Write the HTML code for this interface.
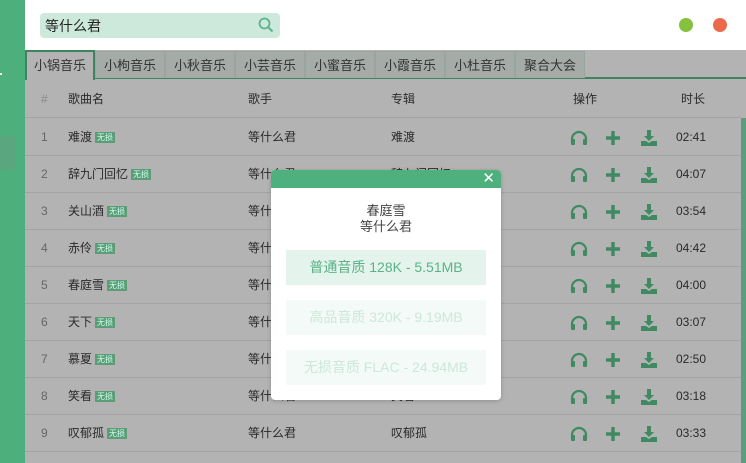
<!DOCTYPE html><html style="width:746px;height:463px;overflow:hidden"><head><meta charset="utf-8"><style>
*{margin:0;padding:0;box-sizing:border-box}
body{width:746px;height:463px;overflow:hidden;position:relative;background:#b3b3b3;font-family:"Liberation Sans","Noto Sans CJK SC",sans-serif;font-size:12px;color:#2a2a2a}
.side{position:absolute;left:0;top:0;width:25px;height:463px;background:#4daf7b}
.blk{position:absolute;left:0;top:136px;width:15px;height:34px;background:#5aa77f;border-radius:0 3px 3px 0}
.top{position:absolute;left:25px;top:0;width:721px;height:50px;background:#fff}
.search{position:absolute;left:15px;top:13px;width:240px;height:25px;background:#cde9dc;border-radius:4px;font-size:14px;padding:3px 0 0 5px;color:#222}
.dot{position:absolute;top:18px;width:14px;height:14px;border-radius:50%}
.tabs{position:absolute;left:25px;top:50px;width:721px;height:29px;border-bottom:2px solid #3f8460}
.tab{position:absolute;top:1px;height:27px;background:#a5aca8;border:1px solid #9aa5a0;border-bottom:none;font-size:13px;text-align:center;line-height:27px;color:#333}
.tab.a{background:#b3b3b3;border:2px solid #3f8460;border-bottom:none;height:30px;top:0}
.row{position:absolute;left:25px;width:716px;height:37px;border-bottom:1px solid #a3a3a3;line-height:37px}
.row span{position:absolute;top:0}
.n{left:16px;color:#666}
.tg{display:inline-block;background:#5c9d77;color:#cfe;font-size:8px;line-height:11px;height:11px;padding:0 2px;margin-left:3px;vertical-align:middle;font-style:normal}
.ic{position:absolute;top:11px}
.scroll{position:absolute;left:741px;top:118px;width:5px;height:345px;background:#5c9e7c}
.mod{position:absolute;left:271px;top:170px;width:230px;height:230px;background:#fff;border-radius:4px;overflow:hidden;box-shadow:0 1px 4px rgba(0,0,0,.2)}
.mh{height:18px;background:#4eb07d;color:#fff;text-align:right;padding-right:6px;font-size:15px;line-height:17px}
.t{text-align:center;font-size:13px;color:#444;line-height:16px}
.b{position:absolute;left:15px;width:200px;height:35px;text-align:center;line-height:35px;font-size:14px}
</style></head><body>
<div class="side"><div class="blk"></div><div style="position:absolute;left:0;top:73px;width:2px;height:2px;background:#fff"></div></div>
<div class="top"><div class="search">等什么君
<svg style="position:absolute;right:6px;top:4px" width="16" height="16" viewBox="0 0 16 16"><circle cx="6.5" cy="6.5" r="5" fill="none" stroke="#5cb48a" stroke-width="1.8"/><path d="M10 10l4.5 4.5" stroke="#5cb48a" stroke-width="2"/></svg></div>
<div class="dot" style="left:654px;background:#85c03e"></div><div class="dot" style="left:688px;background:#ec6a4c"></div></div>
<div class="tabs">
<div class="tab a" style="left:0;width:70px">小锅音乐</div>
<div class="tab" style="left:70px;width:70px">小枸音乐</div>
<div class="tab" style="left:140px;width:70px">小秋音乐</div>
<div class="tab" style="left:210px;width:70px">小芸音乐</div>
<div class="tab" style="left:280px;width:70px">小蜜音乐</div>
<div class="tab" style="left:350px;width:70px">小霞音乐</div>
<div class="tab" style="left:420px;width:70px">小杜音乐</div>
<div class="tab" style="left:490px;width:70px">聚合大会</div>
</div>
<div class="row" style="top:81px;height:37px;line-height:37px"><span class="n" style="color:#888">#</span><span style="left:43px">歌曲名</span><span style="left:223px">歌手</span><span style="left:366px">专辑</span><span style="left:548px">操作</span><span style="left:656px">时长</span></div>
<div id="rows"></div>
<div class="scroll"></div>
<div class="mod"><div class="mh">✕</div>
<div class="t" style="margin-top:15px">春庭雪</div><div class="t">等什么君</div>
<div class="b" style="top:80px;background:#e4f4ec;color:#5bb286">普通音质 128K - 5.51MB</div>
<div class="b" style="top:130px;background:#f3faf7;color:#cce8da">高品音质 320K - 9.19MB</div>
<div class="b" style="top:180px;background:#f3faf7;color:#cce8da">无损音质 FLAC - 24.94MB</div>
</div>
<script>
var d=[["难渡","难渡","02:41"],["辞九门回忆","辞九门回忆","04:07"],["关山酒","关山酒","03:54"],["赤伶","赤伶","04:42"],["春庭雪","春庭雪","04:00"],["天下","天下","03:07"],["慕夏","慕夏","02:50"],["笑看","笑看","03:18"],["叹郁孤","叹郁孤","03:33"]];
var h="";var hp='<svg class="ic" style="left:545px" width="18" height="16" viewBox="0 0 18 16"><path d="M2 13V9a7 7 0 0114 0v4" fill="none" stroke="#3f8a62" stroke-width="2.2"/><rect x="1" y="9" width="4" height="6" rx="1" fill="#3f8a62"/><rect x="13" y="9" width="4" height="6" rx="1" fill="#3f8a62"/></svg>';
var pl='<svg class="ic" style="left:580px" width="16" height="16" viewBox="0 0 16 16"><path d="M8 1v14M1 8h14" stroke="#3f8a62" stroke-width="3.5"/></svg>';
var dl='<svg class="ic" style="left:615px" width="18" height="16" viewBox="0 0 18 16"><path d="M7 0h4v6h3l-5 5-5-5h3z" fill="#3f8a62"/><path d="M1 11h5l3 2 3-2h5v5H1z" fill="#3f8a62"/></svg>';
for(var i=0;i<9;i++){var r=d[i];h+='<div class="row" style="top:'+(119+i*37)+'px"><span class="n">'+(i+1)+'</span><span style="left:43px">'+r[0]+'<i class="tg">无损</i></span><span style="left:223px">等什么君</span><span style="left:366px">'+r[1]+'</span>'+hp+pl+dl+'<span style="left:651px">'+r[2]+'</span></div>';}
document.getElementById("rows").innerHTML=h;
</script>
</body></html>
